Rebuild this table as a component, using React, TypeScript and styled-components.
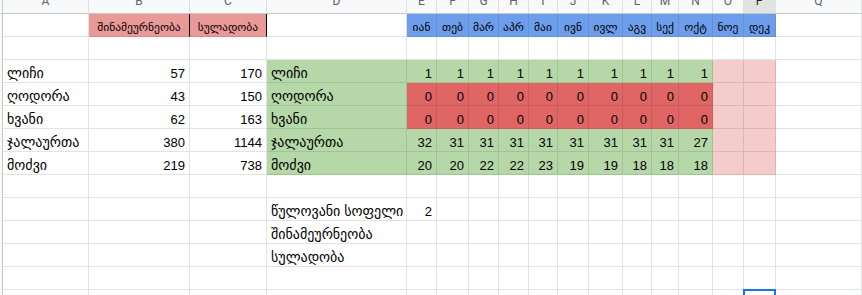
import React from "react";
import styled, { createGlobalStyle } from "styled-components";

const GlobalStyle = createGlobalStyle`
  html, body {
    margin: 0;
    padding: 0;
    background: #ffffff;
    overflow: hidden;
  }
  body {
    font-family: "Liberation Sans", "DejaVu Sans", Arial, sans-serif;
  }
`;

const COLS = [3, 86, 101, 77, 140, 30, 32, 30, 30, 29, 31, 34, 29, 27, 34, 31, 32];
const LETTERS = "ABCDEFGHIJKLMNOPQ".split("");

type Fill = "none" | "salmon" | "blue" | "green" | "red" | "pink";
type Align = "left" | "right" | "center";
type Kind = "number" | "label" | "heading";

const FILLS: Record<Fill, { bg: string; line: string }> = {
  none: { bg: "#ffffff", line: "#e2e3e3" },
  salmon: { bg: "#ea9999", line: "#d58b8b" },
  blue: { bg: "#6d9eeb", line: "#6390d6" },
  green: { bg: "#b6d7a8", line: "#9fc393" },
  red: { bg: "#e06666", line: "#c95d5d" },
  pink: { bg: "#f4cccc", line: "#dcb4b4" },
};

const KINDS: Record<Kind, { size: number; lh: number; pb: number }> = {
  number: { size: 13, lh: 17, pb: 0 },
  label: { size: 14, lh: 18, pb: 0 },
  heading: { size: 11.5, lh: 16, pb: 1 },
};

const Sheet = styled.div`
  display: grid;
  grid-template-columns: ${COLS.map((w) => `${w}px`).join(" ")} 1fr;
  grid-template-rows: 14px;
  grid-auto-rows: 23px;
  width: 862px;
`;

const Corner = styled.div`
  box-sizing: border-box;
  background: #f8f9fa;
  border-right: 1px solid #c4c7c5;
  border-bottom: 1px solid #c4c7c5;
`;

const RowGutter = styled.div`
  box-sizing: border-box;
  background: #f8f9fa;
  border-right: 1px solid #c4c7c5;
`;

const ColHeader = styled.div<{ $active?: boolean }>`
  box-sizing: border-box;
  height: 14px;
  overflow: hidden;
  display: flex;
  align-items: flex-end;
  justify-content: center;
  padding-bottom: 6px;
  background: ${(p) => (p.$active ? "#e1e3e1" : "#f8f9fa")};
  color: ${(p) => (p.$active ? "#1f1f1f" : "#5f6368")};
  border-right: 1px solid #e1e1e1;
  border-bottom: 1px solid #c4c7c5;
  font-family: Roboto, "Liberation Sans", sans-serif;
  font-size: 12px;
  line-height: 12px;
`;

const Cell = styled.div<{
  $fill: Fill;
  $align: Align;
  $kind: Kind;
  $edge?: boolean;
}>`
  position: relative;
  box-sizing: border-box;
  display: flex;
  align-items: flex-end;
  white-space: nowrap;
  color: #000000;
  font-size: ${(p) => KINDS[p.$kind].size}px;
  line-height: ${(p) => KINDS[p.$kind].lh}px;
  padding: 0 4px ${(p) => KINDS[p.$kind].pb}px 4px;
  background: ${(p) => FILLS[p.$fill].bg};
  border-right: 1px solid ${(p) => (p.$edge ? "#000000" : FILLS[p.$fill].line)};
  border-bottom: 1px solid ${(p) => FILLS[p.$fill].line};
  justify-content: ${(p) =>
    p.$align === "right" ? "flex-end" : p.$align === "center" ? "center" : "flex-start"};
`;

const Selection = styled.div`
  position: absolute;
  left: -1px;
  top: -1px;
  width: 33px;
  height: 24px;
  box-sizing: border-box;
  border: 2px solid #1a73e8;
  pointer-events: none;
`;

type CellDef = { text?: string | number; fill?: Fill; align?: Align; kind?: Kind; edge?: boolean };

const MONTHS = ["იან", "თებ", "მარ", "აპრ", "მაი", "ივნ", "ივლ", "აგვ", "სექ", "ოქტ", "ნოე", "დეკ"];

type Village = { name: string; households: number; population: number; months: number[]; fill: Fill };

const VILLAGES: Village[] = [
  { name: "ლიჩი", households: 57, population: 170, months: [1, 1, 1, 1, 1, 1, 1, 1, 1, 1], fill: "green" },
  { name: "ღოდორა", households: 43, population: 150, months: [0, 0, 0, 0, 0, 0, 0, 0, 0, 0], fill: "red" },
  { name: "ხვანი", households: 62, population: 163, months: [0, 0, 0, 0, 0, 0, 0, 0, 0, 0], fill: "red" },
  { name: "ჯალაურთა", households: 380, population: 1144, months: [32, 31, 31, 31, 31, 31, 31, 31, 31, 27], fill: "green" },
  { name: "მოძვი", households: 219, population: 738, months: [20, 20, 22, 22, 23, 19, 19, 18, 18, 18], fill: "green" },
];

// active cell: row 13, column P
const SELECTED = { row: 12, col: 15 };

const blank = (n: number): CellDef[] => Array.from({ length: n }, () => ({}));
const label = (text: string, fill?: Fill): CellDef => ({ text, fill, kind: "label" });
const num = (text: number, fill?: Fill): CellDef => ({ text, fill, align: "right", kind: "number" });

const buildRows = (): CellDef[][] => {
  const rows: CellDef[][] = [];
  rows.push([
    {},
    { text: "შინამეურნეობა", fill: "salmon", align: "center", kind: "heading", edge: true },
    { text: "სულადობა", fill: "salmon", align: "center", kind: "heading", edge: true },
    {},
    ...MONTHS.map((m): CellDef => ({ text: m, fill: "blue", align: "center", kind: "heading" })),
    {},
  ]);
  rows.push(blank(17));
  VILLAGES.forEach((v) => {
    rows.push([
      label(v.name),
      num(v.households),
      num(v.population),
      label(v.name, "green"),
      ...v.months.map((n) => num(n, v.fill)),
      { fill: "pink" },
      { fill: "pink" },
      {},
    ]);
  });
  rows.push(blank(17));
  rows.push([{}, {}, {}, label("წულოვანი სოფელი"), num(2), ...blank(12)]);
  rows.push([{}, {}, {}, label("შინამეურნეობა"), ...blank(13)]);
  rows.push([{}, {}, {}, label("სულადობა"), ...blank(13)]);
  rows.push(blank(17));
  rows.push(blank(17));
  return rows;
};

export default function App() {
  const rows = buildRows();
  return (
    <>
      <GlobalStyle />
      <Sheet>
        <Corner />
        {LETTERS.map((l) => (
          <ColHeader key={l} $active={l === "P"}>
            {l}
          </ColHeader>
        ))}
        {rows.map((row, r) => (
          <React.Fragment key={r}>
            <RowGutter />
            {row.map((c, i) => (
              <Cell
                key={i}
                $fill={c.fill ?? "none"}
                $align={c.align ?? "left"}
                $kind={c.kind ?? "number"}
                $edge={c.edge}
              >
                {c.text}
                {r === SELECTED.row && i === SELECTED.col && <Selection />}
              </Cell>
            ))}
          </React.Fragment>
        ))}
      </Sheet>
    </>
  );
}
